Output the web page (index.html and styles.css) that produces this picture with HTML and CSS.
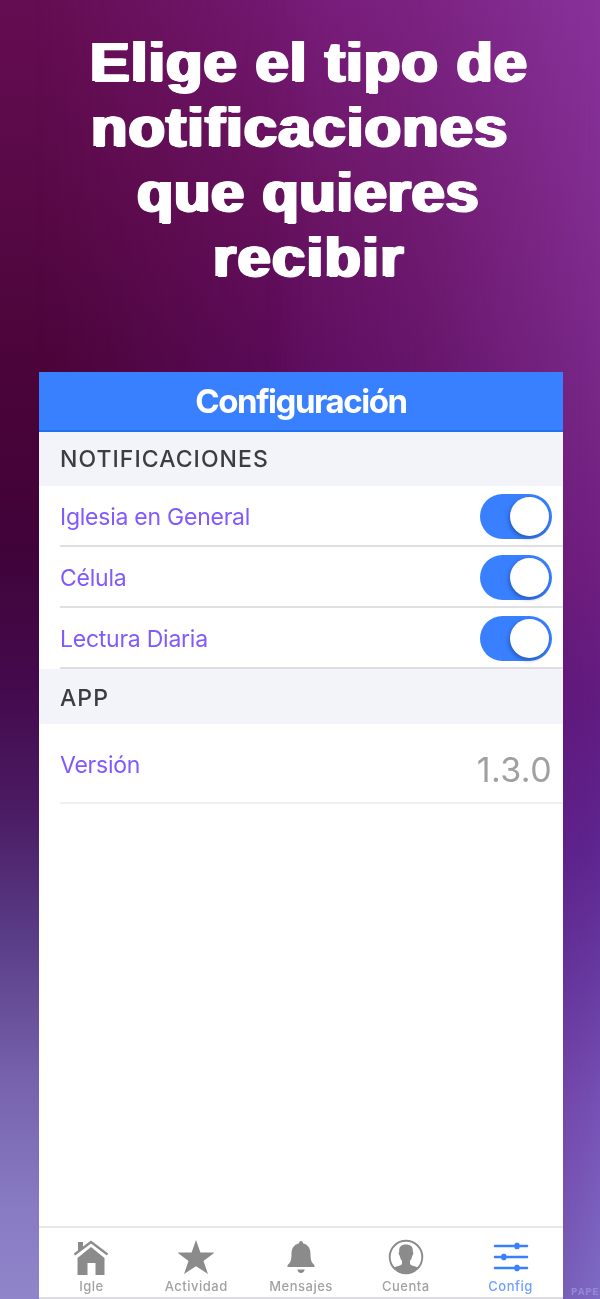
FILE: index.html
```html
<!DOCTYPE html>
<html lang="es">
<head>
<meta charset="utf-8">
<title>Configuración</title>
<link rel="stylesheet" href="styles.css">
</head>
<body>
<main class="promo">
  <h1 class="headline">
    <span class="line line-1">Elige el tipo de</span>
    <span class="line line-2">notificaciones</span>
    <span class="line line-3">que quieres</span>
    <span class="line line-4">recibir</span>
  </h1>
  <section class="phone">
    <header class="titlebar"><span class="title">Configuración</span></header>
    <h2 class="section"><span class="notif-title">NOTIFICACIONES</span></h2>
    <div class="row"><span class="general">Iglesia en General</span><i class="toggle"></i></div>
    <div class="row"><span class="celula">Célula</span><i class="toggle"></i></div>
    <div class="row"><span class="lectura">Lectura Diaria</span><i class="toggle"></i></div>
    <h2 class="section section-app"><span class="app-title">APP</span></h2>
    <div class="row row-version"><span class="version">Versión</span><span class="number">1.3.0</span></div>
    <nav class="tabs">
      <div class="tab"><svg viewBox="0 0 36 36"><path d="M5 13V3h5v6zM4.500 19 18 8l13.500 11v17h-9V24h-8v12h-10z"/><path d="M1.500 15.500 18 3l16.500 12.500" fill="none" stroke="currentColor" stroke-width="2.200"/></svg><span>Igle</span></div>
      <div class="tab"><svg viewBox="0 0 36 36"><path d="m18 1 4.400 12.500H36.500L25.500 22l4.500 13-12-7.800L6 35l4.500-13-11-8.500h14.100z"/></svg><span>Actividad</span></div>
      <div class="tab"><svg viewBox="0 0 36 36"><path d="M18 2c-1.300 0-2 1-2 2.300-5.500 1.300-7.500 5.700-7.500 10.700 0 7-1.500 9-4 11.200V28h27v-1.800c-2.500-2.200-4-4.200-4-11.200 0-5-2-9.400-7.500-10.700C20 3 19.300 2 18 2zM14.300 30.500h7.400c-.5 2.300-1.700 3.500-3.700 3.500s-3.200-1.200-3.700-3.500z"/></svg><span>Mensajes</span></div>
      <div class="tab"><svg viewBox="0 0 36 36"><circle cx="18" cy="18" r="16.300" fill="none" stroke="currentColor" stroke-width="1.900"/><path d="M18 5.500c5.500 0 7.200 3 6.800 7.200.8.300.7 2.800-.6 4.100-.3 2.800-1.400 4-2.200 5v3c0 1.500 4.500 2.200 8 3.900A16.500 16.500 0 0 1 6 28.700c3.500-1.700 8-2.400 8-3.900v-3c-.8-1-1.900-2.200-2.200-5-1.300-1.300-1.400-3.800-.6-4.100C10.800 8.500 12.500 5.500 18 5.500z"/></svg><span>Cuenta</span></div>
      <div class="tab active"><svg viewBox="0 0 36 36"><path d="M2 7h32M2 18h32M2 29h32" stroke="currentColor" stroke-width="2.600" stroke-linecap="round"/><rect x="21.500" y="3.700" width="5" height="6.600" rx="1.800"/><rect x="8.300" y="14.700" width="5" height="6.600" rx="1.800"/><rect x="21.500" y="25.700" width="5" height="6.600" rx="1.800"/></svg><span>Config</span></div>
    </nav>
  </section>
  <span class="watermark">PAPE</span>
</main>
</body>
</html>
```
FILE: styles.css
```css
* { box-sizing: border-box; }
body { margin: 0; font-family: Inter, "Liberation Sans", sans-serif; }
.promo {
  position: relative;
  isolation: isolate;
  display: flex;
  flex-direction: column;
  width: 600px;
  height: 1299px;
  overflow: hidden;
  background: linear-gradient(180deg, #650d52 0, #5b0a49 150px, #4b0439 360px, #400339 550px, #440a4d 690px, #4b1b63 810px, #5a3d88 940px, #7762ad 1080px, #887bc4 1210px, #9084ca 1299px);
}
.promo::before,
.promo::after {
  content: "";
  position: absolute;
  inset: 0;
  z-index: -1;
}
.promo::before {
  background: linear-gradient(180deg, #751a75 0, #68125f 200px, #5c0c5b 360px, #5c0c5b 100%);
  mask-image: linear-gradient(90deg, transparent 6%, #000 52%);
}
.promo::after {
  background: linear-gradient(180deg, #88329a 0, #802c90 220px, #782787 400px, #701f80 560px, #611b80 700px, #5e2590 850px, #673ba2 980px, #7752b6 1110px, #7d6cc6 1299px);
  mask-image: linear-gradient(90deg, transparent 44%, rgba(0, 0, 0, .35) 70%, #000 100%);
}
.headline {
  margin: 0;
  padding-top: 30px;
  height: 372px;
  color: #fff;
  font: bold 55px/65px "Liberation Sans", Arial, sans-serif;
  text-shadow: 1.700px 0 #fff, -1.700px 0 #fff, 1px .5px #fff, -1px -.5px #fff;
}
.line { display: block; width: max-content; transform: scaleX(1.080); transform-origin: left; }
.line-1 { margin-left: 90px; letter-spacing: 1.100px; }
.line-2 { margin-left: 91px; letter-spacing: 1.200px; }
.line-3 { margin-left: 137px; letter-spacing: .75px; }
.line-4 { margin-left: 213px; letter-spacing: 1.350px; }
.phone {
  display: flex;
  flex-direction: column;
  width: 524px;
  height: 927px;
  margin-left: 39px;
  background: #fff;
  border-bottom: 2px solid #dcdce0;
}
.titlebar {
  display: flex;
  align-items: center;
  justify-content: center;
  height: 60px;
  color: #fff;
  background: #3880ff;
  border-bottom: 2px solid #2070f2;
  font-size: 33px;
  font-weight: 650;
  letter-spacing: -1.450px;
}
.section {
  display: flex;
  align-items: center;
  height: 54px;
  margin: 0;
  padding-left: 21px;
  background: #f3f4f9;
  color: #3b3d43;
  font-size: 23px;
  font-weight: 500;
  letter-spacing: 1.050px;
}
.section-app { height: 55px; padding-top: 2px; }
.row {
  display: flex;
  align-items: center;
  justify-content: space-between;
  height: 61px;
  margin-left: 21px;
  padding: 2px 11px 0 0;
  border-bottom: 2px solid #dfdfe1;
  color: #8159ff;
  font-size: 23px;
  letter-spacing: -.25px;
}
.row-version { height: 80px; padding-top: 4px; border-color: #f0f0f1; }
.number { padding-top: 9px; color: #a0a0a0; font-size: 34px; letter-spacing: .4px; }
.title, .section span, .row span { filter: blur(.45px); }
.toggle {
  display: flex;
  justify-content: flex-end;
  width: 72px;
  height: 45px;
  padding: 3px;
  border-radius: 23px;
  background: #3880ff;
}
.toggle::after {
  content: "";
  width: 39px;
  height: 39px;
  border-radius: 50%;
  background: #fff;
  box-shadow: -1px 2px 4px rgba(0, 25, 90, .4);
}
.tabs {
  display: flex;
  height: 71px;
  margin-top: auto;
  border-top: 2px solid #e9e9e9;
  color: #8b8b8b;
}
.tab { display: flex; flex: 1; flex-direction: column; align-items: center; padding-top: 11px; font-size: 13px; font-weight: 500; line-height: 16px; letter-spacing: .5px; filter: blur(.4px); }
.tab svg { display: block; width: 36px; height: 36px; margin-bottom: 3px; fill: currentColor; }
.tab span { color: #a2a2a2; }
.tab.active { color: #3880ff; }
.tab.active span { color: #6f9fff; }
.watermark { position: absolute; left: 571px; bottom: 0; color: #9688d2; font: bold 10.500px/13px "Liberation Mono", monospace; letter-spacing: .8px; }
```
